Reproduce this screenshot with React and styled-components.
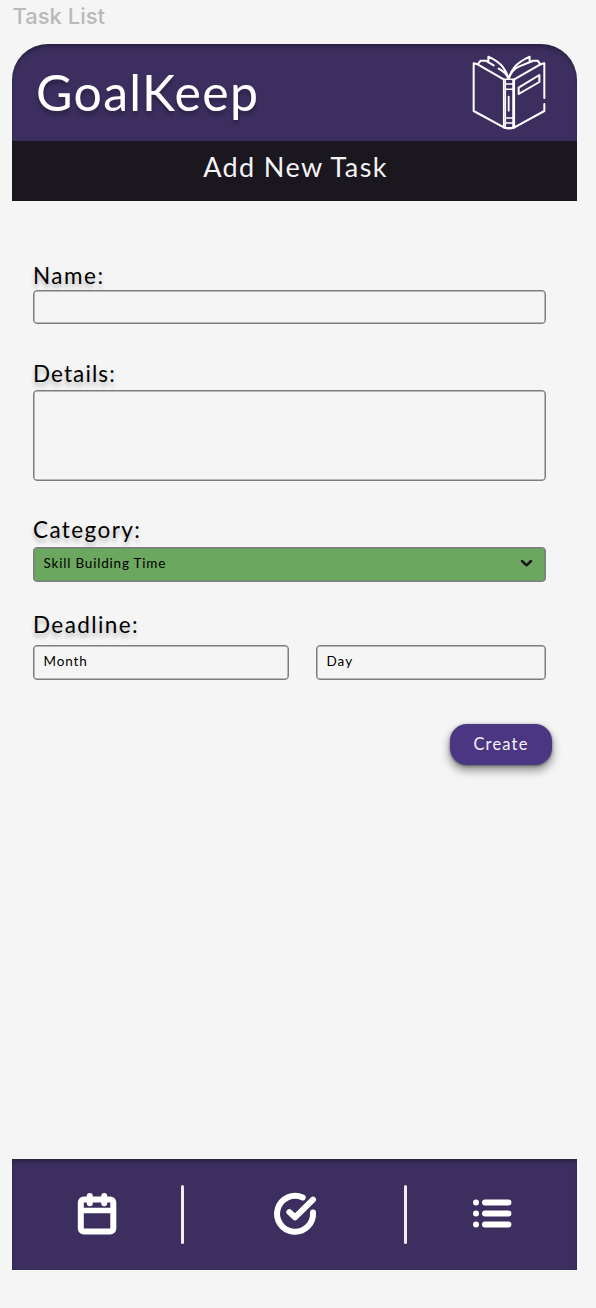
import React from "react";
import styled, { createGlobalStyle } from "styled-components";

const Global = createGlobalStyle`
  *, *::before, *::after { box-sizing: border-box; }
  body { margin: 0; background: #f5f5f5; }
`;

const Page = styled.div`
  width: 596px;
  height: 1308px;
  padding: 4px 19px 38px 12px;
  display: flex;
  flex-direction: column;
  background: #f5f5f5;
  font-family: Lato, "Open Sans", sans-serif;
  color: #000;
  overflow: hidden;
`;

const FrameName = styled.div`
  height: 40px;
  padding-left: 0.5px;
  font: 500 22px/25px Inter, sans-serif;
  color: #b9b9b9;
  white-space: nowrap;
`;

const Screen = styled.main`
  flex: 1;
  display: flex;
  flex-direction: column;
`;

const Header = styled.header`
  height: 97px;
  padding: 11px 31.5px 0 24px;
  display: flex;
  justify-content: space-between;
  align-items: flex-start;
  border-radius: 36px 36px 0 0;
  background: #3c2f60;
  box-shadow: inset 0 5px 5px -2px rgba(0, 0, 0, 0.3), inset 0 0 1px rgba(0, 0, 0, 0.25);
`;

const Text = styled.span`
  display: block;
  white-space: nowrap;
  font-size: ${(p) => p.$size}px;
  line-height: ${(p) => p.$line}px;
  letter-spacing: ${(p) => p.$spacing || 0}px;
  color: ${(p) => p.$color || "#000"};
  text-shadow: ${(p) => p.$shadow || "none"};
`;

const Title = styled.div`
  padding-top: 4px;
`;

const SubHeader = styled.div`
  height: 60px;
  display: flex;
  justify-content: center;
  padding: 8px 0 0 2px;
  background: #1b171f;
`;

const Form = styled.form`
  flex: 1;
  display: flex;
  flex-direction: column;
  padding: 60px 31px 0 21px;
`;

const Field = styled.div`
  display: flex;
  flex-direction: column;
  margin-bottom: ${(p) => p.$after}px;
`;

const LabelRow = styled.div`
  height: ${(p) => p.$height}px;
`;

const Box = styled.div`
  height: ${(p) => p.$height || 35}px;
  width: ${(p) => (p.$width ? p.$width + "px" : "auto")};
  padding: 0 12px 3px 9.5px;
  display: flex;
  align-items: center;
  justify-content: space-between;
  border: 1px solid #7b7d7e;
  box-shadow: inset 0 0 0 0.5px #7b7d7e;
  border-radius: 4px;
  background: ${(p) => p.$fill || "transparent"};
`;

const DateRow = styled.div`
  display: flex;
  justify-content: space-between;
`;

const Button = styled.button`
  align-self: flex-end;
  width: 102px;
  height: 41px;
  margin-right: -6px;
  padding: 0 0 2px;
  display: flex;
  align-items: center;
  justify-content: center;
  border: 0;
  border-radius: 17px;
  background: #4b3683;
  box-shadow: 0 5px 8px 1px rgba(0, 0, 0, 0.38), 0 1px 3px rgba(0, 0, 0, 0.45);
  font-family: inherit;
`;

const Nav = styled.nav`
  height: 111px;
  padding-bottom: 1px;
  display: grid;
  grid-template-columns: 169px 3px 220px 3px 170px;
  align-items: center;
  justify-items: center;
  background: #3c2f60;
  box-shadow: inset 0 5px 5px -2px rgba(0, 0, 0, 0.3), inset 0 0 1px rgba(0, 0, 0, 0.25);
`;

const Divider = styled.i`
  width: 3px;
  height: 59px;
  border-radius: 2px;
  background: #efedf1;
`;

const Icon = styled.svg`
  display: block;
  fill: none;
  stroke: ${(p) => p.$color || "#fff"};
  stroke-linecap: round;
  stroke-linejoin: round;
  overflow: visible;
`;

const Book = () => (
  <Icon width="74" height="75" viewBox="50 45 222 225" strokeWidth="6">
    <path d="M145 118L67 73L55 70V213L147 263Q161 268 176 263L267 213V192M267 174V70L255 73L177 118" />
    <path d="M145 118H177V263H145ZM150 119V263M173 119V263M150 132H173M150 148H173M150 234H173M150 249H173" strokeWidth="4.5" />
    <path d="M160 170V212" strokeWidth="5.5" />
    <path d="M67 73L76 62L91 62L115 76M255 73L247 62L232 62M160 116C153 93 143 70 99 50V64M130 86Q151 97 160 116C166 91 180 70 223 50V66M160 116Q170 88 192 79L232 63" />
    <path d="M190 143L252 105V126L190 162Z" />
  </Icon>
);

const CalendarIcon = () => (
  <Icon width="40" height="43" viewBox="0 0 40 43" strokeWidth="6">
    <rect x="3.8" y="6.5" width="32.5" height="32" rx="3" />
    <path d="M4 17.5H36" strokeWidth="5.5" />
    <path d="M12.8 3V10.2M27.2 3V10.2" />
  </Icon>
);

const CheckIcon = () => (
  <Icon width="41" height="43" viewBox="0 0 41 43" strokeWidth="6">
    <path d="M28.7 4.5A18 18 0 1 0 39 19.5" />
    <path d="M15.4 19.1L21 24.4L39 6.7" />
  </Icon>
);

const ListIcon = () => (
  <Icon width="39" height="28" viewBox="0 0 39 28" strokeWidth="6">
    <path d="M3 2.6H3.01M3 13.6H3.01M3 24.4H3.01M12 2.6H35.4M12 13.6H35.4M12 24.4H35.4" />
  </Icon>
);

const labelShadow = "0 4px 4px rgba(0,0,0,.25)";

const Label = ({ children, spacing, line = 28 }) => (
  <Text $size={22.5} $line={line} $spacing={spacing} $shadow={labelShadow}>{children}</Text>
);

export default function App() {
  return (
    <>
      <Global />
      <Page>
        <FrameName>Task List</FrameName>
        <Screen>
          <Header>
            <Title>
              <Text $size={50} $line={66} $spacing={1.3} $color="#fff" $shadow="0 4px 4px rgba(0,0,0,.3)">GoalKeep</Text>
            </Title>
            <Book />
          </Header>
          <SubHeader>
            <Text $size={27} $line={36} $spacing={1.4} $color="#f4f4f4">Add New Task</Text>
          </SubHeader>
          <Form onSubmit={(e) => e.preventDefault()}>
            <Field $after={36}>
              <LabelRow $height={29}><Label spacing={1.5} line={29}>Name:</Label></LabelRow>
              <Box $height={34} />
            </Field>
            <Field $after={35}>
              <LabelRow $height={30}><Label spacing={1.1} line={27}>Details:</Label></LabelRow>
              <Box $height={91} />
            </Field>
            <Field $after={29}>
              <LabelRow $height={31}><Label spacing={1.4}>Category:</Label></LabelRow>
              <Box $fill="#6ba75f">
                <Text $size={13.5} $line={20} $spacing={0.8}>Skill Building Time</Text>
                <Icon width="13" height="8" viewBox="0 0 13 8" $color="#181818" strokeWidth="2.5">
                  <path d="M2 2L6.5 6.3L11 2" />
                </Icon>
              </Box>
            </Field>
            <Field $after={44}>
              <LabelRow $height={34}><Label spacing={1.4}>Deadline:</Label></LabelRow>
              <DateRow>
                <Box $width={256}><Text $size={13.5} $line={18} $spacing={0.9}>Month</Text></Box>
                <Box $width={230}><Text $size={13.5} $line={18} $spacing={1}>Day</Text></Box>
              </DateRow>
            </Field>
            <Button type="submit">
              <Text $size={16.5} $line={22} $spacing={1.2} $color="#f4f4f4">Create</Text>
            </Button>
          </Form>
          <Nav>
            <CalendarIcon />
            <Divider />
            <CheckIcon />
            <Divider />
            <ListIcon />
          </Nav>
        </Screen>
      </Page>
    </>
  );
}
